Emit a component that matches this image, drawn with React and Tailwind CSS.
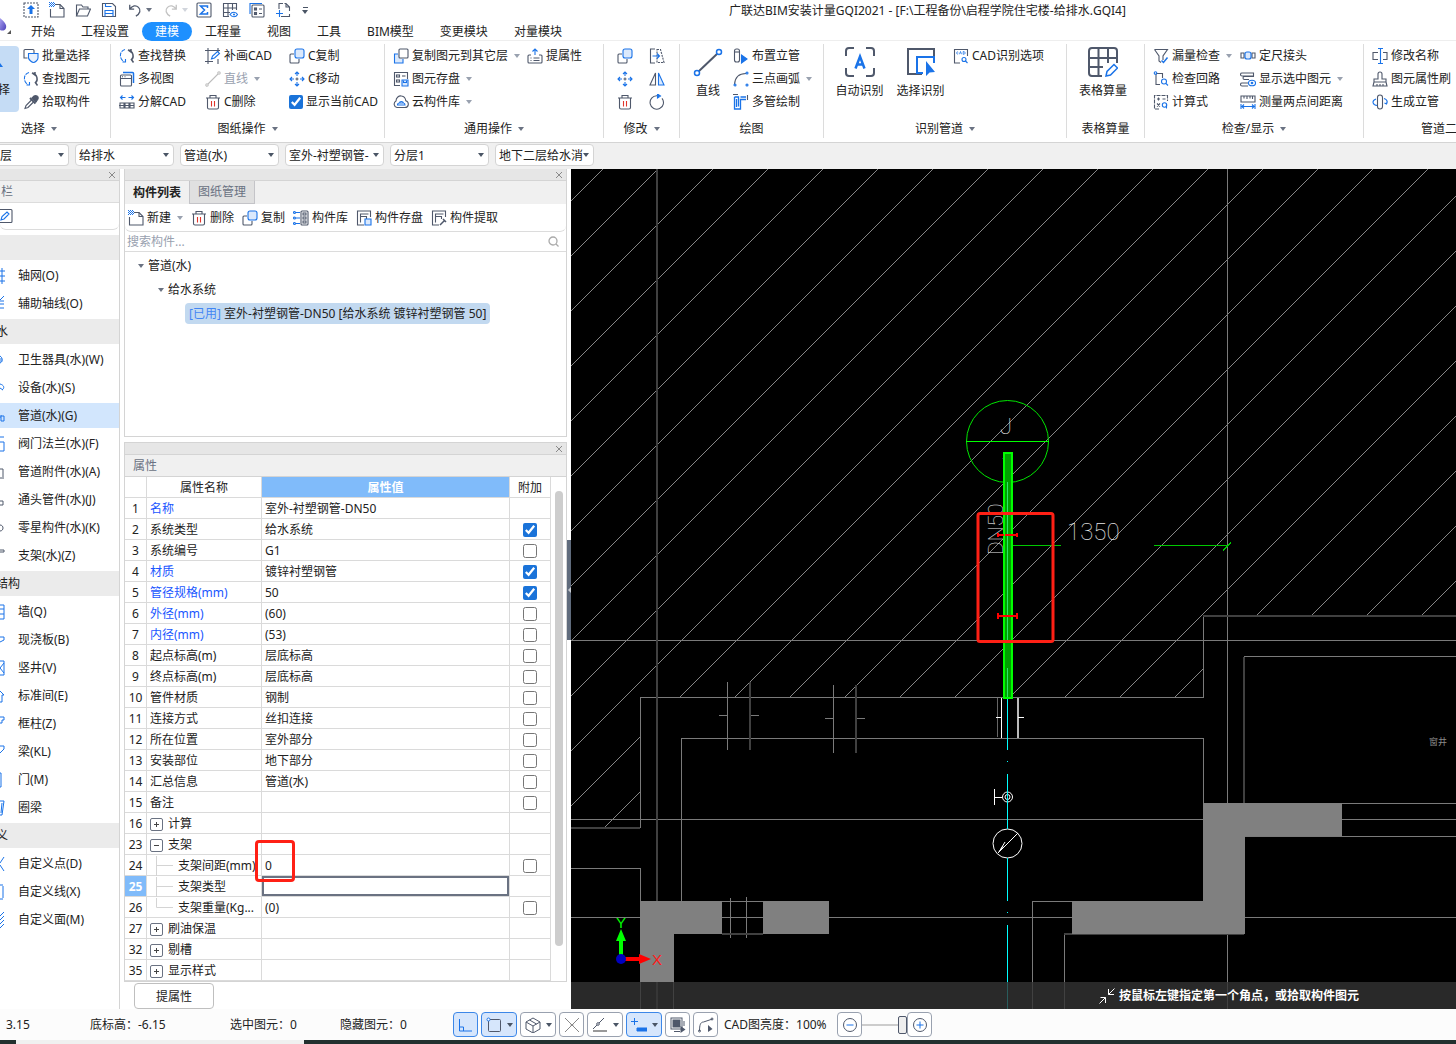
import React from 'react';

const INK = '#4f586b';
const BLUE = '#1a73e8';

const icons = {
    upload: <><rect x="1" y="1" width="14" height="14" strokeDasharray="2 1" /><path d="M8 3l4 4H9.500v5h-3V7H4z" fill={BLUE} stroke="none" /></>,
    newDoc: <><path d="M6 2.500h5l4 4v8.500H1.500V7" /><path d="M11 2.500v4h4" /><path d="M0 .5h5M1 1.500h5M0 2.500h5M1 3.500h5M0 4.500h5" stroke={BLUE} strokeDasharray="1 1" strokeWidth="1" /></>,
    open: <path d="M1.500 14V3h5l1.500 2h5v2M1.500 14h11L15.500 7H4.500z" />,
    save: <><path d="M1.500 1.500h10l3 3v10h-13z" /><path d="M4.500 1.500v3h6M4 14.500V8.500h8v6M4 11.500h8" stroke={BLUE} /></>,
    undo: <path d="M2 2v5h5M2 7c3-4 7-5 10-2s2 7-3 10" strokeWidth="1.500" />,
    redo: <path d="M14 2v5H9M14 7c-3-4-7-5-10-2s-2 7 3 10" strokeWidth="1.500" stroke="#c2c2c2" />,
    sigma: <><rect x="1" y="1" width="14" height="14" rx="1" /><path d="M11.500 6V4h-7l4 4-4 4h7v-2" stroke={BLUE} strokeWidth="1.500" /></>,
    gridEye: <><path d="M7 14.500H1.500v-13h13V8M1.500 6h13M1.500 10.500H8M6 1.500v13M10.500 1.500V8" /><path d="M8 12.500c2-3 6-3 7.500 0-1.500 3-5.500 3-7.500 0z" stroke={BLUE} /><circle cx="12" cy="12.500" r="1" fill={BLUE} stroke="none" /></>,
    sheets: <><path d="M1 12V1.500h12" stroke={BLUE} /><rect x="3" y="3" width="12" height="12" rx="1" /><rect x="5.500" y="6" width="2" height="2" /><rect x="5.500" y="10.500" width="2" height="2" /><path d="M10 7h3M10 11.500h3" /></>,
    docPlus: <><path d="M4 7V1.500h4M6 14.500h8.500V12M14.500 9V5l-3.500-3.500H9.500M11 1.500V5h3.500" /><path d="M1 11.500h7M4.500 8v7" stroke={BLUE} /></>,
    batch: <><path d="M11 5V2.500a1 1 0 0 0-1-1H2a1 1 0 0 0-1 1V10h3.500" /><path d="M5.500 5.500h9.500V10c0 2-3 4.500-4.500 4.500S6 12 5.500 10z" stroke={BLUE} fill="#e8f1fd" /></>,
    find: <><path d="M6 1.500C0 3 0 11 5 13.500" stroke={BLUE} strokeDasharray="4 1" /><path d="M3.500 14h3v-3" stroke={BLUE} /><path d="M9 2c6 1 6 8 3.500 9.500M12 1v3l-3-2M12 11l2.500 3.500" strokeWidth="1.500" /></>,
    dropper: <><path d="M9 4l4 4 2-3c1-3-2-4-4-3z" fill={INK} /><path d="M7 4l5.500 5.500" strokeWidth="2" /><path d="M8.500 6L3 11.500 2 14.500l3-1 5.500-5.500" /></>,
    views: <><rect x="1.500" y="4" width="11" height="11" rx="1" /><path d="M1.500 7.500h11M3 5.800h1M5.500 5.800h1" /><path d="M4 1.500h9.500a1 1 0 0 1 1 1V12" stroke={BLUE} strokeWidth="1.500" /></>,
    split: <><path d="M1.500 3.500h5M3.500 1.500l-2 2 2 2M14.500 3.500h-5M12.500 1.500l2 2-2 2" stroke={BLUE} /><path d="M1 13V9h4v5H1zM6 14h4V9H6zM15 14h-4V9h4zM0 11.500h15.500" /></>,
    frameEdit: <><path d="M3 0v16M0 2.500h15M0 13.500h8M13 0v4M13 11v5" /><path d="M6.500 11l1-3 5-4.500 2 2L9.500 10z" stroke={BLUE} /></>,
    thinLine: <g stroke="#bdbdbd"><path d="M3 13L13 3" /><circle cx="2" cy="14" r="1.200" /><circle cx="14" cy="2" r="1.200" /></g>,
    trash: <><path d="M1 4h14M5 4V1.500h6V4M2.500 4v9.500a1.500 1.500 0 0 0 1.500 1.500h8a1.500 1.500 0 0 0 1.500-1.500V4" /><path d="M6.500 7v5.500M9.500 7v5.500" stroke="#e0352b" /></>,
    copy: <><path d="M5 6H2a1 1 0 0 0-1 1v7a1 1 0 0 0 1 1h7a1 1 0 0 0 1-1v-3" /><rect x="6" y="1" width="9" height="9" rx="2" stroke={BLUE} fill="#dbe9fc" /></>,
    move: <g stroke={BLUE}><path d="M8 1v4M8 11v4M1 8h4M11 8h4M6 3l2-2 2 2M6 13l2 2 2-2M3 6L1 8l2 2M13 6l2 2-2 2" /><path d="M8 6.500v3M6.500 8h3" stroke={INK} /></g>,
    copyLayer: <><path d="M5 6H1.500v9H10v-4" stroke={BLUE} fill="#dbe9fc" /><rect x="6" y="1" width="9" height="9" rx="1" fill="#fff" /></>,
    store: <><path d="M7 14.500H1.500v-13h13V8" /><rect x="3.500" y="4" width="3" height="2" /><rect x="3.500" y="9" width="3" height="2" /><path d="M9 5h3.500" /><path d="M9 9h6v6H9z" stroke={BLUE} fill="#dbe9fc" /><path d="M10.500 9.500v2h3v-2" stroke={BLUE} /></>,
    cloud: <><path d="M4 13.500a3.500 3.500 0 0 1-1-6.500C3 3.500 6 1.500 8.500 2c3 .3 4 2.500 4.300 4.800C16.500 8 16 13.500 12 13.500z" /><path d="M4.500 11c0-1.500 1-2 2-2 0-2 3.500-2 4 0 1 0 1.500.8 1.500 2zM6 9h5" stroke={BLUE} /></>,
    lift: <><path d="M4 7H2a1 1 0 0 0-1 1v6a1 1 0 0 0 1 1h12a1 1 0 0 0 1-1V8a1 1 0 0 0-1-1h-2M3.500 10h1M3.500 12.500h1M6.500 10h6M6.500 12.500h6" /><path d="M8 7V1M5.500 3.500L8 1l2.500 2.500" stroke={BLUE} /></>,
    stretch: <><path d="M6 15H1.500V1H6" /><path d="M8 1.500h3.500l3.500 13H8z" strokeDasharray="2 1" /><path d="M3.500 8H10M8 5.500L10.500 8 8 10.500" stroke={BLUE} /></>,
    mirror: <><path d="M6.500 2v12H1z" /><path d="M9.500 2v12H15z" stroke={BLUE} fill="#dbe9fc" /></>,
    rotate: <><path d="M8 1.800a6.700 6.700 0 1 0 5 2.500" /><path d="M8.500 0l3 2-3 2z" fill={BLUE} stroke={BLUE} /></>,
    riser: <><rect x="1.500" y="1" width="5" height="13" rx="2" /><path d="M1.500 4h5" /><path d="M8.500 7v8l5.500-4z" fill={BLUE} stroke={BLUE} /></>,
    arc: <><path d="M1.500 13.500C2 6 6 2.500 13 2.500" /><g stroke={BLUE}><circle cx="14" cy="2" r="1" /><circle cx="2" cy="14" r="1" /><circle cx="14" cy="14" r="1" /></g></>,
    pipes: <><path d="M0 .5h5M14.500 1v5" /><path d="M1.500 3h4v9.500M1.500 3v12h6V5.500H13M3.500 5v8M7.500 3H13" stroke={BLUE} strokeWidth="1.300" /></>,
    cadOpts: <><path d="M7 15H1.500V8M14.500 8V1.500H1.500v7" /><path d="M5.200 4.200c-2-1.500-2 3 0 1.600M6.500 6.200l1-2.700 1 2.700M10.200 3.500v2.800c2.500.3 2.500-3 0-2.800" stroke={BLUE} strokeWidth=".8" /><circle cx="11" cy="11.500" r="2" stroke={BLUE} /><path d="M12.500 13l2 2" stroke={BLUE} /></>,
    funnel: <><path d="M1.500 1.500h13L10 8v4M1.500 1.500L6 8v5l2 1.500" /><path d="M8.500 12.500l2 2 4-5" stroke={BLUE} strokeWidth="1.500" /></>,
    loop: <><path d="M3 3v10.500h4M3 2.500h6.500V7" /><circle cx="2.500" cy="2" r="1.300" stroke={BLUE} /><circle cx="11" cy="10.500" r="2.500" stroke={BLUE} /><path d="M13 12.500l2 2" stroke={BLUE} /></>,
    formula: <><path d="M6 15H1.500V1.500h13V7" strokeDasharray="4 1" /><path d="M4 5h3M5.500 3.500v3M9.500 5h3M4 9.500l3 3M7 9.500l-3 3" /><circle cx="11.500" cy="11" r="2.200" stroke={BLUE} /><path d="M13.500 10v4.500" stroke={BLUE} /></>,
    joint: <><path d="M1 5h3v5H1zM15 5h-3v5h3z" /><rect x="5" y="4" width="6" height="7" rx="2" stroke={BLUE} fill="#dbe9fc" /></>,
    showSel: <><path d="M2 2h11.500v3H2a1 1 0 0 1 0-3zM14 5.500H4.500a1 1 0 0 0 0 3H9M8 12H2a1.500 1.500 0 0 0 0 3h6" /><ellipse cx="12" cy="12" rx="3.500" ry="2.800" stroke={BLUE} /><circle cx="12" cy="12" r=".8" stroke={BLUE} /></>,
    ruler: <><path d="M1 2h14v6H1zM4 2v2.500M7 2v3M10 2v2.500M12.500 2v3" /><path d="M1 10v5M15 10v5M1 12.500h14M4 10.500l-2 2 2 2M12 10.500l2 2-2 2" stroke={BLUE} /></>,
    rename: <><path d="M6 4.500H1v7h5M11 4.500h4v7h-4" /><path d="M6 .5h5M6 15.500h5M8.500.5v15" stroke={BLUE} /></>,
    brush: <path d="M6 8V3a2 2 0 0 1 4 0v5h4v3H2V8zM2 11l-1 4h14l-1-4M5 15v-2M8 15v-2M11 15v-2" />,
    genRiser: <><rect x="5.500" y="1" width="5" height="14" rx="2.500" /><path d="M4 5c-5 2-3 6 1 6.500M12 4.500c3 1 4 3 2.500 5.500l-2-1M14.500 10l.5-2.500" stroke={BLUE} /></>,
    library: <><path d="M3 2.500h4M3 8h4M3 13.500h4" stroke={BLUE} /><g stroke={BLUE}><circle cx="1.500" cy="2.500" r="1" /><circle cx="1.500" cy="8" r="1" /><circle cx="1.500" cy="13.500" r="1" /></g><rect x="8" y="1" width="7" height="14" rx="1" /><rect x="10" y="3" width="3" height="2" /><rect x="10" y="7" width="3" height="2" /><rect x="10" y="11" width="3" height="2" /></>,
    compSave: <><path d="M8 15H1.500V1h13v6" /><path d="M4.500 12.500V4h8M4.500 6.500h6V9" /><path d="M9 9h6v6H9z" stroke={BLUE} fill="#dbe9fc" /></>,
    compPick: <><path d="M8 15H1.500V1h13v6" /><path d="M4.500 12.500V4h8M4.500 6.500h6V9" /><path d="M9 15l4-4M12 9l3 3" strokeWidth="1.500" /></>,
    edit: <><rect x="-3" y="1.500" width="15" height="13" rx="1" /><path d="M1 12l1-3.500L7 4l2 2-5 5z" stroke={BLUE} /></>,
};

const Icon = ({ name, className = 'size-4' }) => (
    <svg viewBox="0 0 16 16" fill="none" stroke={INK} strokeWidth="1.100" className={`${className} flex-none`} aria-hidden="true">
        {icons[name]}
    </svg>
);

const Caret = ({ className = 'text-gray-500' }) => (
    <svg viewBox="0 0 6 4" className={`h-1 w-1.5 flex-none ${className}`} aria-hidden="true">
        <path d="M0 0h6L3 4z" fill="currentColor" />
    </svg>
);

const Tool = ({ icon, label, caret, disabled }) => (
    <button type="button" disabled={disabled} className="flex h-[23px] items-center gap-[3px] whitespace-nowrap disabled:text-gray-400">
        <Icon name={icon} />
        <span>{label}</span>
        {caret && <span className="ml-[3px]"><Caret className="text-gray-400" /></span>}
    </button>
);

const IconTool = ({ icon, title }) => (
    <button type="button" aria-label={title} className="flex h-[23px] items-center">
        <Icon name={icon} />
    </button>
);

const BigTool = ({ label, className, children }) => (
    <button type="button" className={`flex flex-none flex-col items-center gap-1.5 self-start pt-[3px] ${className}`}>
        <svg viewBox="0 0 30 30" fill="none" stroke={INK} strokeWidth="2" className="size-[30px]" aria-hidden="true">{children}</svg>
        <span className="leading-4 whitespace-nowrap">{label}</span>
    </button>
);

const Group = ({ caption, caret = true, className, captionClass = 'justify-center', children }) => (
    <section className={`flex flex-none flex-col ${className}`}>
        <div className="flex h-[69px]">{children}</div>
        <div className={`flex h-[29px] items-center gap-1.5 pt-0.5 ${captionClass}`}>
            <span>{caption}</span>
            {caret && <Caret className="text-gray-500" />}
        </div>
    </section>
);

const Divider = () => <div className="mb-1 w-px flex-none bg-[#dcdcdc]" />;

const tabs = ['开始', '工程设置', '建模', '工程量', '视图', '工具', 'BIM模型', '变更模块', '对量模块'];

const TitleBar = () => (
    <header className="flex h-[22px] flex-none items-center">
        <div className="flex w-[313px] flex-none items-center pb-0.5 pl-[23px]">
            <div className="flex w-[94px] justify-between">
                {['upload', 'newDoc', 'open', 'save'].map((n) => (
                    <button type="button" key={n} aria-label={n}><Icon name={n} /></button>
                ))}
            </div>
            <div className="ml-[11px] flex w-[60px] items-center justify-between">
                <button type="button" aria-label="undo" className="flex items-center gap-1"><Icon name="undo" className="size-[14px]" /><Caret /></button>
                <button type="button" aria-label="redo" className="flex items-center gap-1"><Icon name="redo" className="size-[14px]" /><Caret className="text-gray-300" /></button>
            </div>
            <div className="ml-2 flex w-[95px] justify-between">
                {['sigma', 'gridEye', 'sheets', 'docPlus'].map((n) => (
                    <button type="button" key={n} aria-label={n}><Icon name={n} /></button>
                ))}
            </div>
            <button type="button" aria-label="customize" className="ml-[11px] flex flex-col items-center gap-0.5">
                <span className="h-px w-[5px] bg-gray-600" />
                <Caret className="text-gray-600" />
            </button>
        </div>
        <h1 className="ml-[86px] flex-1 text-center whitespace-nowrap">广联达BIM安装计量GQI2021 - [F:\工程备份\启程学院住宅楼-给排水.GQI4]</h1>
    </header>
);

const TabBar = () => (
    <nav className="relative flex h-[19px] flex-none items-start border-b border-[#eeeeee]">
        <svg viewBox="0 0 18 19" className="-mt-1 h-[19px] w-[18px] flex-none" aria-hidden="true">
            <defs>
                <linearGradient id="logo" x1="0" y1="0" x2="1" y2="1">
                    <stop offset="0" stopColor="#a9a0f0" />
                    <stop offset="1" stopColor="#4a3fb8" />
                </linearGradient>
            </defs>
            <path d="M0 0c4 3 7 7 6 10s-4 3-6 2z" fill="url(#logo)" />
            <path d="M11 12v4H7z" fill="#555" />
        </svg>
        {tabs.map((t) => (
            <button
                type="button"
                key={t}
                className={`relative h-[19px] px-[13px] leading-[19px] whitespace-nowrap ${t === '建模' ? 'rounded-full bg-[#1e90ff] text-white' : ''}`}
            >
                {t}
            </button>
        ))}
    </nav>
);

const Ribbon = () => (
    <div className="flex flex-none overflow-hidden border-b border-[#d4d4d4] pt-[3px]">
        <Group caption="选择" className="w-[110px]" captionClass="pl-[21px]">
            <button type="button" className="mt-[2px] flex h-[66px] w-[19px] flex-none flex-col items-start overflow-hidden rounded-r-sm bg-[#c5dcf5]">
                <svg viewBox="0 0 19 30" className="mt-1 h-[30px] w-[19px]" aria-hidden="true"><path d="M0 13l3 4H0z" fill={BLUE} /></svg>
                <span className="-ml-0.5 block leading-5">择</span>
            </button>
            <div className="ml-[4px]">
                <Tool icon="batch" label="批量选择" />
                <Tool icon="find" label="查找图元" />
                <Tool icon="dropper" label="拾取构件" />
            </div>
        </Group>
        <Divider />
        <Group caption="图纸操作" className="w-[273px]">
            <div className="ml-2 w-[86px]">
                <Tool icon="find" label="查找替换" />
                <Tool icon="views" label="多视图" />
                <Tool icon="split" label="分解CAD" />
            </div>
            <div className="w-[84px]">
                <Tool icon="frameEdit" label="补画CAD" />
                <Tool icon="thinLine" label="直线" caret disabled />
                <Tool icon="trash" label="C删除" />
            </div>
            <div>
                <Tool icon="copy" label="C复制" />
                <Tool icon="move" label="C移动" />
                <label className="flex h-[23px] items-center gap-[3px] whitespace-nowrap">
                    <input type="checkbox" defaultChecked className="size-[14px] accent-[#1a73d9]" />
                    显示当前CAD
                </label>
            </div>
        </Group>
        <Divider />
        <Group caption="通用操作" className="w-[218px]">
            <div className="ml-2 w-[134px]">
                <Tool icon="copyLayer" label="复制图元到其它层" caret />
                <Tool icon="store" label="图元存盘" caret />
                <Tool icon="cloud" label="云构件库" caret />
            </div>
            <Tool icon="lift" label="提属性" />
        </Group>
        <Divider />
        <Group caption="修改" className="w-[75px]">
            <div className="ml-[13px] w-8">
                <IconTool icon="copy" title="copy" />
                <IconTool icon="move" title="move" />
                <IconTool icon="trash" title="delete" />
            </div>
            <div>
                <IconTool icon="stretch" title="stretch" />
                <IconTool icon="mirror" title="mirror" />
                <IconTool icon="rotate" title="rotate" />
            </div>
        </Group>
        <Divider />
        <Group caption="绘图" caret={false} className="w-[143px]">
            <BigTool label="直线" className="ml-2 w-10">
                <path d="M5 25L25 6" />
                <g stroke={BLUE} fill="#fff" strokeWidth="1.500"><circle cx="4" cy="26" r="2.500" /><circle cx="26" cy="5" r="2.500" /></g>
            </BigTool>
            <div className="ml-[5px]">
                <Tool icon="riser" label="布置立管" />
                <Tool icon="arc" label="三点画弧" caret />
                <Tool icon="pipes" label="多管绘制" />
            </div>
        </Group>
        <Divider />
        <Group caption="识别管道" className="w-[242px]">
            <BigTool label="自动识别" className="ml-[5px] w-[61px]">
                <path d="M1 9V4a3 3 0 0 1 3-3h5M21 1h5a3 3 0 0 1 3 3v5M29 21v5a3 3 0 0 1-3 3h-5M9 29H4a3 3 0 0 1-3-3v-5" />
                <path d="M10.500 21.500L15 9.500l4.500 12M12 17.500h6" stroke={BLUE} strokeWidth="2.500" />
            </BigTool>
            <BigTool label="选择识别" className="w-[61px]">
                <path d="M16 27H2V2h26v8" />
                <path d="M17 26H11V10h17v6" stroke={BLUE} />
                <path d="M20 14v15l3.500-3.500L29 25z" fill={BLUE} stroke="none" />
            </BigTool>
            <div className="ml-[2px]">
                <Tool icon="cadOpts" label="CAD识别选项" />
            </div>
        </Group>
        <Divider />
        <Group caption="表格算量" caret={false} className="w-[77px]">
            <BigTool label="表格算量" className="w-18">
                <path d="M14 29H4a3 3 0 0 1-3-3V4a3 3 0 0 1 3-3h22a3 3 0 0 1 3 3v12M1 11h28M1 20h14M10.500 1v28M20 1v15" />
                <path d="M18 29l1-4.500 7-7 3.500 3.500-7 7z" stroke={BLUE} strokeWidth="1.500" />
            </BigTool>
        </Group>
        <Divider />
        <Group caption="检查/显示" className="w-[218px]">
            <div className="ml-2 w-[87px]">
                <Tool icon="funnel" label="漏量检查" caret />
                <Tool icon="loop" label="检查回路" />
                <Tool icon="formula" label="计算式" />
            </div>
            <div>
                <Tool icon="joint" label="定尺接头" />
                <Tool icon="showSel" label="显示选中图元" caret />
                <Tool icon="ruler" label="测量两点间距离" />
            </div>
        </Group>
        <Divider />
        <Group caption="管道二" caret={false} className="w-[93px]" captionClass="pl-[57px] whitespace-nowrap">
            <div className="ml-2">
                <Tool icon="rename" label="修改名称" />
                <Tool icon="brush" label="图元属性刷" />
                <Tool icon="genRiser" label="生成立管" />
            </div>
        </Group>
    </div>
);

const combos = [
    ['专业', '给排水'],
    ['构件类型', '管道(水)'],
    ['构件', '室外-衬塑钢管-'],
    ['分层', '分层1'],
    ['图纸', '地下二层给水消'],
];

const Combo = ({ name, value, className = 'w-[99px] rounded-sm border pl-[3px]' }) => (
    <div className={`relative h-[22px] flex-none border-[#d4d4d4] bg-white ${className}`}>
        <select aria-label={name} className="h-full w-full appearance-none overflow-hidden pt-px pr-2.5 outline-none">
            <option>{value}</option>
        </select>
        <span className="pointer-events-none absolute top-2 right-1 flex"><Caret className="text-gray-600" /></span>
    </div>
);

const ComboBar = () => (
    <div className="flex h-[26px] flex-none gap-1.5 bg-[#f0f0f0] pt-px">
        <Combo name="楼层" value="层" className="w-[69px] rounded-r-sm border border-l-0" />
        {combos.map(([name, value]) => <Combo key={name} name={name} value={value} />)}
    </div>
);

const PanelStrip = () => (
    <div className="flex h-3 flex-none items-center justify-end border-b border-[#d4d4d4] bg-[#e6e6e6] pr-[3px]">
        <button type="button" aria-label="close">
            <svg viewBox="0 0 8 8" stroke="#8a8a8a" className="size-2" aria-hidden="true"><path d="M1 1l6 6M7 1L1 7" /></svg>
        </button>
    </div>
);

const navItems = [
    { head: '' },
    { label: '轴网(O)', d: 'M0 3h5M0 8h5M0 13h5M2 0v16' },
    { label: '辅助轴线(O)', d: 'M0 4l4-4M0 8h4M0 12h4M0 5h4' },
    { head: '水' },
    { label: '卫生器具(水)(W)', d: 'M0 4c3 2 3 6 0 7M1 6v4' },
    { label: '设备(水)(S)', d: 'M0 4c4 1 5 4 2 6M0 8l3 2' },
    { label: '管道(水)(G)', d: 'M0 9h1M1 7v6M1 8h3v5H1', active: true },
    { label: '阀门法兰(水)(F)', d: 'M0 1h4M0 6h4v9H0' },
    { label: '管道附件(水)(A)', d: 'M0 5h3v8M0 14h4', dark: true },
    { label: '通头管件(水)(J)', d: 'M0 9h3v4H0', dark: true },
    { label: '零星构件(水)(K)', d: 'M0 5c4 0 4 6 0 6', dark: true },
    { label: '支架(水)(Z)', d: 'M0 2h4v2H0', dark: true },
    { head: '结构' },
    { label: '墙(Q)', d: 'M0 1h4v14H0M0 5h4M0 10h4' },
    { label: '现浇板(B)', d: 'M0 5h4v3l-4 2' },
    { label: '竖井(V)', d: 'M0 1h4v14H0M0 8l4-5M0 8l4 5' },
    { label: '标准间(E)', d: 'M0 3l4 4H2v7H0' },
    { label: '框柱(Z)', d: 'M0 1h4v3H2v3H0' },
    { label: '梁(KL)', d: 'M0 2h4v3l-4 4' },
    { label: '门(M)', d: 'M0 1h1v14H0' },
    { label: '圈梁', d: 'M0 1h4L2 15H0M2 3L1 13' },
    { head: '义' },
    { label: '自定义点(D)', d: 'M4 1L0 7M0 9l4 6' },
    { label: '自定义线(X)', d: 'M3 2v12M0 1h3M0 15h3' },
    { label: '自定义面(M)', d: 'M0 4l4-4M0 8l4-4M0 12l4-4M0 16l4-4' },
];

const Sidebar = () => (
    <aside className="flex w-[120px] flex-none flex-col overflow-hidden border-r border-[#d4d4d4]">
        <PanelStrip />
        <div className="h-[22px] flex-none border-b border-[#dcdcdc] bg-[#f0f0f0] pl-px leading-[21px] text-gray-500">栏</div>
        <div className="flex h-[27px] flex-none items-center rounded-md border-b border-[#dcdcdc]">
            <button type="button" aria-label="edit"><Icon name="edit" /></button>
        </div>
        <div className="mt-[5px] flex flex-col gap-[3px]">
            {navItems.map((item, i) => (item.label ? (
                <button
                    type="button"
                    key={item.label}
                    className={`flex h-[25px] items-center gap-[13px] text-left whitespace-nowrap ${item.active ? 'bg-[#d2e6fd]' : ''}`}
                >
                    <svg viewBox="0 0 5 16" fill="none" stroke={item.dark ? INK : BLUE} className="h-4 w-[5px] flex-none" aria-hidden="true">
                        <path d={item.d} />
                    </svg>
                    {item.label}
                </button>
            ) : (
                <div key={i} className="h-[25px] bg-[#ebebeb] leading-[25px]"><span className="-ml-1">{item.head}</span></div>
            )))}
        </div>
    </aside>
);

const ComponentPanel = () => (
    <section className="flex min-h-0 flex-1 flex-col border border-t-0 border-[#d4d4d4]">
        <PanelStrip />
        <div className="flex h-[23px] flex-none bg-[#f0f0f0]">
            <button type="button" className="w-[65px] border-r border-[#c4c4c8] font-bold">构件列表</button>
            <button type="button" className="w-[65px] border-r border-b border-[#c4c4c8] bg-[#e0e0e0] text-gray-500">图纸管理</button>
        </div>
        <div className="flex h-[28px] flex-none items-center gap-2 rounded-md border-b border-[#dcdcdc] pl-[3px]">
            <Tool icon="newDoc" label="新建" caret />
            <Tool icon="trash" label="删除" />
            <Tool icon="copy" label="复制" />
            <Tool icon="library" label="构件库" />
            <Tool icon="compSave" label="构件存盘" />
            <Tool icon="compPick" label="构件提取" />
        </div>
        <div className="flex h-5 flex-none items-center border-b border-[#dcdcdc] pr-[7px] pl-0.5">
            <input type="text" aria-label="搜索构件" placeholder="搜索构件..." className="h-full flex-1 outline-none placeholder:text-gray-400" />
            <svg viewBox="0 0 11 11" fill="none" stroke="#aaa" strokeWidth="1.300" className="size-[11px]" aria-hidden="true"><circle cx="5" cy="5" r="4" /><path d="M8 8l2.500 2.500" /></svg>
        </div>
        <ul className="min-h-0 flex-1 overflow-hidden pt-[2px] leading-6">
            <li>
                <div className="flex items-center gap-1 pl-[13px]"><Caret />管道(水)</div>
                <ul>
                    <li>
                        <div className="flex items-center gap-1 pl-[33px]"><Caret />给水系统</div>
                        <ul>
                            <li className="flex h-[23px] items-center pl-[60px]">
                                <button type="button" className="h-[21px] rounded-sm bg-[#c2d9f0] px-1 leading-[21px] whitespace-nowrap">
                                    <span className="text-[#4285f4]">[已用]</span> 室外-衬塑钢管-DN50 [给水系统 镀锌衬塑钢管 50]
                                </button>
                            </li>
                        </ul>
                    </li>
                </ul>
            </li>
        </ul>
    </section>
);

// check: undefined = no box, otherwise the box state
const props = [
    { no: 1, name: '名称', value: '室外-衬塑钢管-DN50', link: true },
    { no: 2, name: '系统类型', value: '给水系统', check: true },
    { no: 3, name: '系统编号', value: 'G1', check: false },
    { no: 4, name: '材质', value: '镀锌衬塑钢管', check: true, link: true },
    { no: 5, name: '管径规格(mm)', value: '50', check: true, link: true },
    { no: 6, name: '外径(mm)', value: '(60)', check: false, link: true },
    { no: 7, name: '内径(mm)', value: '(53)', check: false, link: true },
    { no: 8, name: '起点标高(m)', value: '层底标高', check: false },
    { no: 9, name: '终点标高(m)', value: '层底标高', check: false },
    { no: 10, name: '管件材质', value: '钢制', check: false },
    { no: 11, name: '连接方式', value: '丝扣连接', check: false },
    { no: 12, name: '所在位置', value: '室外部分', check: false },
    { no: 13, name: '安装部位', value: '地下部分', check: false },
    { no: 14, name: '汇总信息', value: '管道(水)', check: false },
    { no: 15, name: '备注', value: '', check: false },
    { no: 16, name: '计算', group: '+' },
    { no: 23, name: '支架', group: '-' },
    { no: 24, name: '支架间距(mm)', value: '0', check: false, child: true, marked: true },
    { no: 25, name: '支架类型', value: '', child: true, editing: true },
    { no: 26, name: '支架重量(Kg...', value: '(0)', check: false, child: true, last: true },
    { no: 27, name: '刷油保温', group: '+' },
    { no: 32, name: '剔槽', group: '+' },
    { no: 35, name: '显示样式', group: '+' },
];

const PropName = ({ row }) => {
    if (row.group) {
        return (
            <div className="flex items-center gap-[5px]">
                <button type="button" aria-label={row.name} className="flex size-[13px] items-center justify-center rounded-xs border border-gray-500">
                    <svg viewBox="0 0 7 7" stroke="#444" className="size-[7px]" aria-hidden="true">
                        <path d={row.group === '+' ? 'M1 3.500h5M3.500 1v5' : 'M1 3.500h5'} />
                    </svg>
                </button>
                {row.name}
            </div>
        );
    }
    if (row.child) {
        return (
            <div className="flex items-center whitespace-nowrap">
                <svg viewBox="0 0 28 20" fill="none" stroke="#d4d4d4" className="-my-px h-5 w-7 flex-none" aria-hidden="true">
                    <path d={row.last ? 'M6.500 0v9.500H23' : 'M6.500 0v20M6.500 9.500H23'} />
                </svg>
                {row.name}
            </div>
        );
    }
    return row.name;
};

const PropertyPanel = () => (
    <section className="flex flex-none flex-col">
        <div className="border border-[#d4d4d4]">
            <PanelStrip />
            <h2 className="h-[21px] bg-[#f0f0f0] pl-2 leading-[21px] text-gray-500">属性</h2>
            <div className="flex border-t border-[#d4d4d4]">
                <table className="flex-none table-fixed border-separate border-spacing-0 [&_td]:h-[21px] [&_td]:border-r [&_td]:border-b [&_td]:border-[#dadada] [&_td]:p-0 [&_td]:pt-0.5 [&_th]:h-[21px] [&_th]:border-r [&_th]:border-b [&_th]:border-[#dadada] [&_th]:p-0 [&_th]:pt-px">
                    <colgroup>
                        <col className="w-[22px]" />
                        <col className="w-[115px]" />
                        <col className="w-[248px]" />
                        <col className="w-[41px]" />
                    </colgroup>
                    <thead>
                        <tr>
                            <th />
                            <th className="font-normal">属性名称</th>
                            <th className="bg-[#80bbfa] text-white">属性值</th>
                            <th className="font-normal">附加</th>
                        </tr>
                    </thead>
                    <tbody>
                        {props.map((row) => (
                            <tr key={row.no} className="leading-[18px]">
                                <td className={`text-center ${row.editing ? 'bg-[#80bbfa] font-bold text-white' : ''}`}>{row.no}</td>
                                <td className={row.link ? 'text-[#1a56ff]' : ''}>
                                    <div className="w-[114px] pl-[3px]"><PropName row={row} /></div>
                                </td>
                                <td className="relative">
                                    {row.editing
                                        ? <input type="text" aria-label={row.name} className="-mt-0.5 block h-5 w-full border-2 border-gray-500 px-0.5 outline-none" />
                                        : <div className="pl-[3px]">{row.value}</div>}
                                    {row.marked && <span className="absolute -top-[15px] -left-[7px] z-10 h-[42px] w-10 rounded-sm border-3 border-[#ff2015]" />}
                                </td>
                                <td className="text-center">
                                    {row.check !== undefined && (
                                        <input type="checkbox" aria-label={row.name} defaultChecked={row.check} className="mx-auto block size-[14px] accent-[#1a73d9]" />
                                    )}
                                </td>
                            </tr>
                        ))}
                    </tbody>
                </table>
                <div className="flex flex-1 justify-center pt-3.5">
                    <div className="h-[455px] w-2 rounded-full bg-[#cdcdcd]" />
                </div>
            </div>
        </div>
        <div className="h-[27px] pt-px pl-2.5">
            <button type="button" className="h-[26px] w-20 rounded border border-[#bfbfbf] bg-white pt-px">提属性</button>
        </div>
    </section>
);

const hatch = Array.from({ length: 25 }, (_, i) => 772 + i * 55);

const Drawing = () => (
    <svg viewBox="571 169 885 840" preserveAspectRatio="xMinYMin slice" className="absolute inset-0 h-full w-full" shapeRendering="crispEdges" fill="none" aria-label="CAD">
        <defs>
            <clipPath id="soil">
                <path d="M571 169H1456V615H1203V697H640V828H571z" />
            </clipPath>
        </defs>
        <g clipPath="url(#soil)" stroke="#868686">
            {hatch.map((s) => <path key={s} d={`M${s - 169} 169L${s - 830} 830`} />)}
        </g>
        <g stroke="#7a7a7a">
            <path d="M571 640.500H1456M1227.500 169V803M1227.500 934V1009" />
            <path d="M640.500 828V697.500H1203.500V615M681.500 901V738.500H1203.500V803" />
            <path d="M571 819.500H1203M1342 819.500H1456M571 868.500H640.500V901" />
            <path d="M1244 656.500H1456M1342 803.500H1456M1244 836.500H1456" />
            <path d="M1032.500 1009V901.500H1203M828 917.500H1072M1244 917.500H1456M571 917.500H640M1064.500 1009V934" />
            <path d="M722 901.500H763M722 917.500H763M730.500 898V938M746.500 897V938M640.500 982V1009M673.500 982V1009" />
            <path d="M727.500 682V750M719 715.500H727M751 715.500H759M833.500 685V753M825 718.500H833M857 718.500H865" />
        </g>
        <g stroke="#404040" strokeWidth="2">
            <path d="M657 169V901M657 982V1009M571 828H640M1203 616H1456M1244 657V803M750 682V750M856 685V753M722 934H763M1064 934H1244" />
        </g>
        <g fill="#808080">
            <path d="M1203 803H1342V836H1244.500V934H1072V901H1203z" />
            <path d="M640 901H722V934H674V982H640zM763 901H828.500V934H763z" />
        </g>

        <path d="M997.500 698V737" stroke="#666" />
        <path d="M1001.500 698V738M996 717.500H1001" stroke="#fff" />
        <path d="M1018 698V738" stroke="#bbb" strokeWidth="2" />
        <path d="M1018 717.500H1024" stroke="#fff" />
        <g shapeRendering="auto" stroke="#fff">
            <circle cx="1007.500" cy="797" r="5" />
            <circle cx="1007.500" cy="797" r="2.500" />
            <circle cx="1007.500" cy="843.500" r="14.500" />
            <path d="M994.500 789V805M994.500 797.500H1002M1018 833L998 853M999 852l6-10M999 852l4-6" />
        </g>
        <path d="M1007.500 698V750M1007.500 761V762M1007.500 774V829M1007.500 858V901M1007.500 912V913M1007.500 925V1009" stroke="#00ffff" />

        <g fontFamily='Roboto, "Liberation Sans", sans-serif' fontWeight="100" fill="#e6e6e6">
            <text x="1067" y="540" fontSize="24">1350</text>
            <text transform="translate(1003 555) rotate(-90)" fontSize="21">DN50</text>
            <text x="1000" y="434" fontSize="22">J</text>
            <text x="1001" y="471" fontSize="20">1</text>
        </g>
        <text x="1429" y="745" fontSize="9" fill="#8a8a8a" fontFamily='"Noto Sans CJK SC", sans-serif'>窗井</text>

        <circle cx="1007.500" cy="441.500" r="41" stroke="#00e600" shapeRendering="auto" />
        <path d="M966 441.500H1049" stroke="#00ff00" />
        <path d="M1013 545.500H1061M1154 545.500H1228M1223 550.500L1231 542.500" stroke="#00c800" />
        <rect x="1004" y="453" width="8" height="245" fill="#00a000" stroke="#00ff00" strokeWidth="2" />
        <path d="M1007.500 482V642M1007.500 668V697" stroke="#2ee66b" />

        <g stroke="#ff0000" strokeWidth="2">
            <path d="M997 534.500H1004M1011 534.500H1018M1005 534.500H1011M997 616H1018" />
            <path d="M998 532.500V536.500M1017 532.500V537M998 613V619M1017 613V619" />
        </g>
        <rect x="978" y="513.500" width="75" height="128" rx="2" stroke="#ff2015" strokeWidth="3" shapeRendering="auto" />

        <g shapeRendering="auto">
            <path d="M621 956V938" stroke="#00ff00" strokeWidth="4" />
            <path d="M616 941L621 929L626 941z" fill="#00ff00" />
            <path d="M625 959H641" stroke="#ff0000" strokeWidth="4" />
            <path d="M639 954L651 959L639 964z" fill="#ff0000" />
            <circle cx="621" cy="959" r="5" fill="#0000c0" />
            <g fontFamily='"Liberation Sans", sans-serif' fontSize="15">
                <text x="616" y="928" fill="#00ff00">Y</text>
                <text x="652" y="965" fill="#ff1a1a">X</text>
            </g>
        </g>
    </svg>
);

const Canvas = () => (
    <main className="relative min-w-0 flex-1 overflow-hidden bg-black">
        <Drawing />
        <p className="absolute inset-x-0 bottom-0 flex h-[27px] items-center justify-end gap-1 bg-[#333333]/80 pr-[97px] font-bold text-white">
            <svg viewBox="0 0 16 16" fill="none" stroke="#fff" className="size-4" aria-hidden="true">
                <path d="M15.500.5l-6 6M9.500 1v5.500H15M.5 15.500l6-6M1.500 9.500h5V15" />
            </svg>
            按鼠标左键指定第一个角点，或拾取构件图元
        </p>
    </main>
);

const StatusButton = ({ title, active, caret, children }) => (
    <button
        type="button"
        aria-label={title}
        className={`flex h-[25px] flex-none items-center justify-center rounded-sm border ${caret ? 'w-9 gap-[5px]' : 'w-[25px]'} ${active ? 'border-[#3c87e8] bg-[#d6e6fc]' : 'border-gray-400 bg-white'}`}
    >
        <svg viewBox="0 0 16 16" fill="none" stroke={INK} className="size-4" aria-hidden="true">{children}</svg>
        {caret && <Caret className="text-gray-600" />}
    </button>
);

const StatusBar = () => (
    <footer className="flex h-[31px] flex-none items-center gap-[3px] bg-[#fcfcfc] pl-1.5 whitespace-nowrap">
        <span className="w-[81px] flex-none">3.15</span>
        <span className="w-[137px] flex-none">底标高：-6.15</span>
        <span className="w-[107px] flex-none">选中图元：0</span>
        <span className="w-[110px] flex-none">隐藏图元：0</span>
        <StatusButton title="ortho" active><path d="M1.500 2v12H14M1.500 10h4v4" stroke={BLUE} /></StatusButton>
        <StatusButton title="snap" active caret><rect x="2.500" y="2.500" width="12" height="12" rx="1" /><circle cx="2.500" cy="2.500" r="1.500" stroke={BLUE} fill="#fff" /></StatusButton>
        <StatusButton title="view" caret><path d="M8 1l7 4v7l-7 4-7-4V5zM1 5l7 4 7-4M8 9v7M4.500 3l7 4" /></StatusButton>
        <StatusButton title="cross"><path d="M1 1l14 14M15 1L1 15M6.500 8h3" stroke="#888" /></StatusButton>
        <StatusButton title="angle" caret><path d="M1 12L12 1" /><circle cx="6" cy="7" r="1.300" fill="#fff" /><path d="M1 14h14" stroke="#999" strokeWidth="2" /></StatusButton>
        <StatusButton title="input" active caret><path d="M0 4.500h7M3.500 1v7" stroke={BLUE} /><path d="M6 11h10v3H6z" fill={BLUE} stroke={BLUE} /></StatusButton>
        <StatusButton title="layers"><rect x="1" y="1" width="11" height="11" /><rect x="3" y="3" width="7" height="7" fill={INK} /><path d="M14 4v5M4 14.500h6" /><path d="M10.500 9v7l5-3.500z" fill={INK} stroke="none" /></StatusButton>
        <StatusButton title="trace"><path d="M1.500 14c0-6 1-9 4-9l9-3" /><circle cx="14" cy="2" r="1" /><circle cx="1.500" cy="14" r="1" /><path d="M10 8v7l4.500-3z" fill={INK} stroke="none" /></StatusButton>
        <label htmlFor="brightness" className="ml-[3px] w-[110px] flex-none">CAD图亮度：100%</label>
        <div className="flex items-center">
            <StatusButton title="darker"><circle cx="8" cy="8" r="6.500" /><path d="M4.500 8h7" stroke={BLUE} /></StatusButton>
            <input
                id="brightness"
                type="range"
                defaultValue="100"
                className="h-5 w-[45px] appearance-none bg-transparent [&::-webkit-slider-runnable-track]:h-0.5 [&::-webkit-slider-runnable-track]:bg-[#cccccc] [&::-webkit-slider-thumb]:-mt-2 [&::-webkit-slider-thumb]:h-[18px] [&::-webkit-slider-thumb]:w-[9px] [&::-webkit-slider-thumb]:appearance-none [&::-webkit-slider-thumb]:rounded-xs [&::-webkit-slider-thumb]:border [&::-webkit-slider-thumb]:border-[#4f586b] [&::-webkit-slider-thumb]:bg-[#eeeeee]"
            />
            <StatusButton title="brighter"><circle cx="8" cy="8" r="6.500" /><path d="M4.500 8h7M8 4.500v7" stroke={BLUE} /></StatusButton>
        </div>
    </footer>
);

const App = () => (
    <div className="flex h-screen flex-col overflow-hidden bg-white font-['Noto_Sans','Noto_Sans_CJK_SC',sans-serif] text-xs text-[#222222]">
        <TitleBar />
        <TabBar />
        <Ribbon />
        <ComboBar />
        <div className="flex min-h-0 flex-1 gap-1">
            <Sidebar />
            <div className="relative flex w-[443px] flex-none flex-col gap-[5px]">
                <ComponentPanel />
                <PropertyPanel />
                <button type="button" aria-label="collapse" className="absolute top-[371px] -right-1 flex h-[100px] w-1 items-center bg-[#5f6b7c]">
                    <svg viewBox="0 0 4 6" className="h-1.5 w-1" aria-hidden="true"><path d="M4 0v6L1 3z" fill="#c8ccd2" /></svg>
                </button>
            </div>
            <Canvas />
        </div>
        <StatusBar />
        <div className="flex h-1 flex-none bg-[#22302f]">
            <div className="ml-4 w-72 bg-[#f0f0f0]" />
        </div>
    </div>
);

export default App;
